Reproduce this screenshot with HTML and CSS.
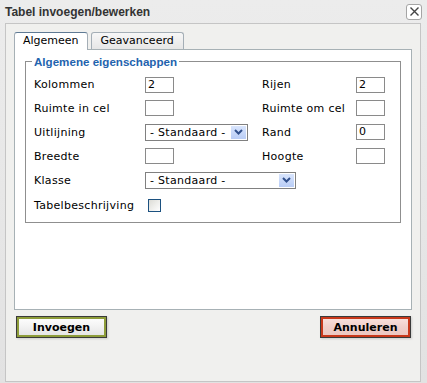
FILE: index.html
```html
<!DOCTYPE html>
<html lang="nl">
<head>
    <meta charset="UTF-8">
    <title>Tabel invoegen/bewerken</title>
    <link rel="stylesheet" href="styles.css">
</head>
<body>
    <div class="dialog">
        <div class="titlebar">
            <span class="title">Tabel invoegen/bewerken</span>
            <span class="close">
                <svg width="11" height="11" viewBox="0 0 11 11">
                    <path d="M1.5 1.5 L9.5 9.5 M9.5 1.5 L1.5 9.5" stroke="#444" stroke-width="1.4" fill="none"/>
                </svg>
            </span>
        </div>

        <div class="contents">
            <div class="tabs">
                <div class="tab active">Algemeen</div>
                <div class="tab">Geavanceerd</div>
            </div>

            <div class="panel">
                <fieldset class="props">
                    <legend>Algemene eigenschappen</legend>
                    <div class="grid">
                        <label>Kolommen</label>
                        <span class="field">2</span>
                        <label>Rijen</label>
                        <span class="field">2</span>

                        <label>Ruimte in cel</label>
                        <span class="field"></span>
                        <label>Ruimte om cel</label>
                        <span class="field"></span>

                        <label>Uitlijning</label>
                        <span class="select small">
                            <span class="value">- Standaard -</span>
                            <span class="arrow"><svg width="9" height="6" viewBox="0 0 9 6"><path d="M1 1 L4.5 4.5 L8 1" stroke="#31508c" stroke-width="2" fill="none"/></svg></span>
                        </span>
                        <label>Rand</label>
                        <span class="field">0</span>

                        <label>Breedte</label>
                        <span class="field"></span>
                        <label>Hoogte</label>
                        <span class="field"></span>

                        <label>Klasse</label>
                        <span class="select wide">
                            <span class="value">- Standaard -</span>
                            <span class="arrow"><svg width="9" height="6" viewBox="0 0 9 6"><path d="M1 1 L4.5 4.5 L8 1" stroke="#31508c" stroke-width="2" fill="none"/></svg></span>
                        </span>

                        <label>Tabelbeschrijving</label>
                        <span><span class="check"></span></span>
                    </div>
                </fieldset>
            </div>

            <div class="footer">
                <button class="btn ok">Invoegen</button>
                <button class="btn cancel">Annuleren</button>
            </div>
        </div>
    </div>
</body>
</html>
```

FILE: styles.css
```css
body {
    margin: 0;
    font-family: "DejaVu Sans", Verdana, sans-serif;
    font-size: 11px;
    color: #000;
    background: #fff;
}
.dialog {
    width: 427px;
    height: 383px;
    box-sizing: border-box;
    background: linear-gradient(#ececec, #e2e2e2);
    padding: 0 6px 1px 5px;
    display: flex;
    flex-direction: column;
}
.titlebar {
    height: 23px;
    display: flex;
    align-items: center;
    justify-content: space-between;
}
.title {
    font-family: "Liberation Sans", Arial, sans-serif;
    font-weight: bold;
    font-size: 12px;
    color: #333;
    margin-top: 1px;
}
.close {
    width: 14px;
    height: 14px;
    border: 1px solid #a5a5a5;
    border-radius: 3px;
    background: #fff;
    display: flex;
    align-items: center;
    justify-content: center;
    margin-right: -1px;
}
.contents {
    flex: 1;
    background: #f0f0ee;
    border: 1px solid #c5c5c5;
    padding: 8px 8px 0 8px;
}
.tabs {
    display: flex;
    gap: 3px;
    align-items: flex-end;
    height: 17px;
}
.tab {
    height: 16px;
    line-height: 16px;
    padding: 0 9px;
    border: 1px solid #a4aeb6;
    border-bottom: none;
    border-radius: 3px 3px 0 0;
    background: linear-gradient(#f7f7f7, #e6e6e6);
}
.tab.active {
    height: 17px;
    background: #fff;
    border-top: 1px solid #5f7a94;
    position: relative;
    top: 1px;
    padding: 0 8px;
}
.panel {
    height: 254px;
    background: #fff;
    border: 1px solid #a7b1b5;
    padding: 5px 10px 0 10px;
}
.props {
    margin: 0;
    border: 1px solid #8f8f8f;
    padding: 0 6px 4px 8px;
}
.props legend {
    font-weight: bold;
    color: #2363ae;
    padding: 0 2px;
    margin-left: -2px;
    font-family: "Liberation Sans", Arial, sans-serif;
    font-size: 11.6px;
}
.grid {
    display: grid;
    grid-template-columns: 111px 117px 94px auto;
    grid-template-rows: 23px 24px 24px 24px 24px 26px;
    align-items: center;
    padding-top: 5px;
}
.grid label {
    letter-spacing: 0.3px;
}
.field {
    width: 25px;
    height: 14px;
    border: 1px solid #8a8a8a;
    padding-left: 2px;
    line-height: 14px;
    background: #fff;
}
.select {
    height: 15px;
    border: 1px solid #808080;
    display: flex;
    align-items: center;
    justify-content: space-between;
    padding: 0 1px 0 4px;
}
.select .value {
    letter-spacing: 0.3px;
}
.select.small {
    width: 96px;
}
.select.wide {
    grid-column: 2 / 5;
    width: 144px;
}
.arrow {
    width: 15px;
    height: 13px;
    background: linear-gradient(#d9e5fd, #b9cdf6);
    display: flex;
    align-items: center;
    justify-content: center;
}
.check {
    display: block;
    width: 11px;
    height: 11px;
    border: 1px solid #1c5180;
    background: linear-gradient(135deg, #dcdcd6, #fff);
    margin-left: 3px;
}
.footer {
    display: flex;
    justify-content: space-between;
    padding: 6px 1px 0 2px;
}
.btn {
    width: 91px;
    height: 22px;
    font-family: "DejaVu Sans", Verdana, sans-serif;
    font-size: 11px;
    font-weight: bold;
    color: #000;
    border: 1px solid #3a3a3a;
    background: linear-gradient(#ffffff, #f2f2f2 50%, #e2e2e2);
    padding: 0;
    box-shadow: 1px 1px 2px rgba(0,0,0,0.15);
}
.btn.ok {
    box-shadow: inset 0 0 0 2px #8d9c39, 1px 1px 2px rgba(0,0,0,0.15);
}
.btn.cancel {
    background: linear-gradient(#fbe3df, #f0cfc9 50%, #ecc5bf);
    box-shadow: inset 0 0 0 2px #c8381a, 1px 1px 2px rgba(0,0,0,0.15);
}
```
